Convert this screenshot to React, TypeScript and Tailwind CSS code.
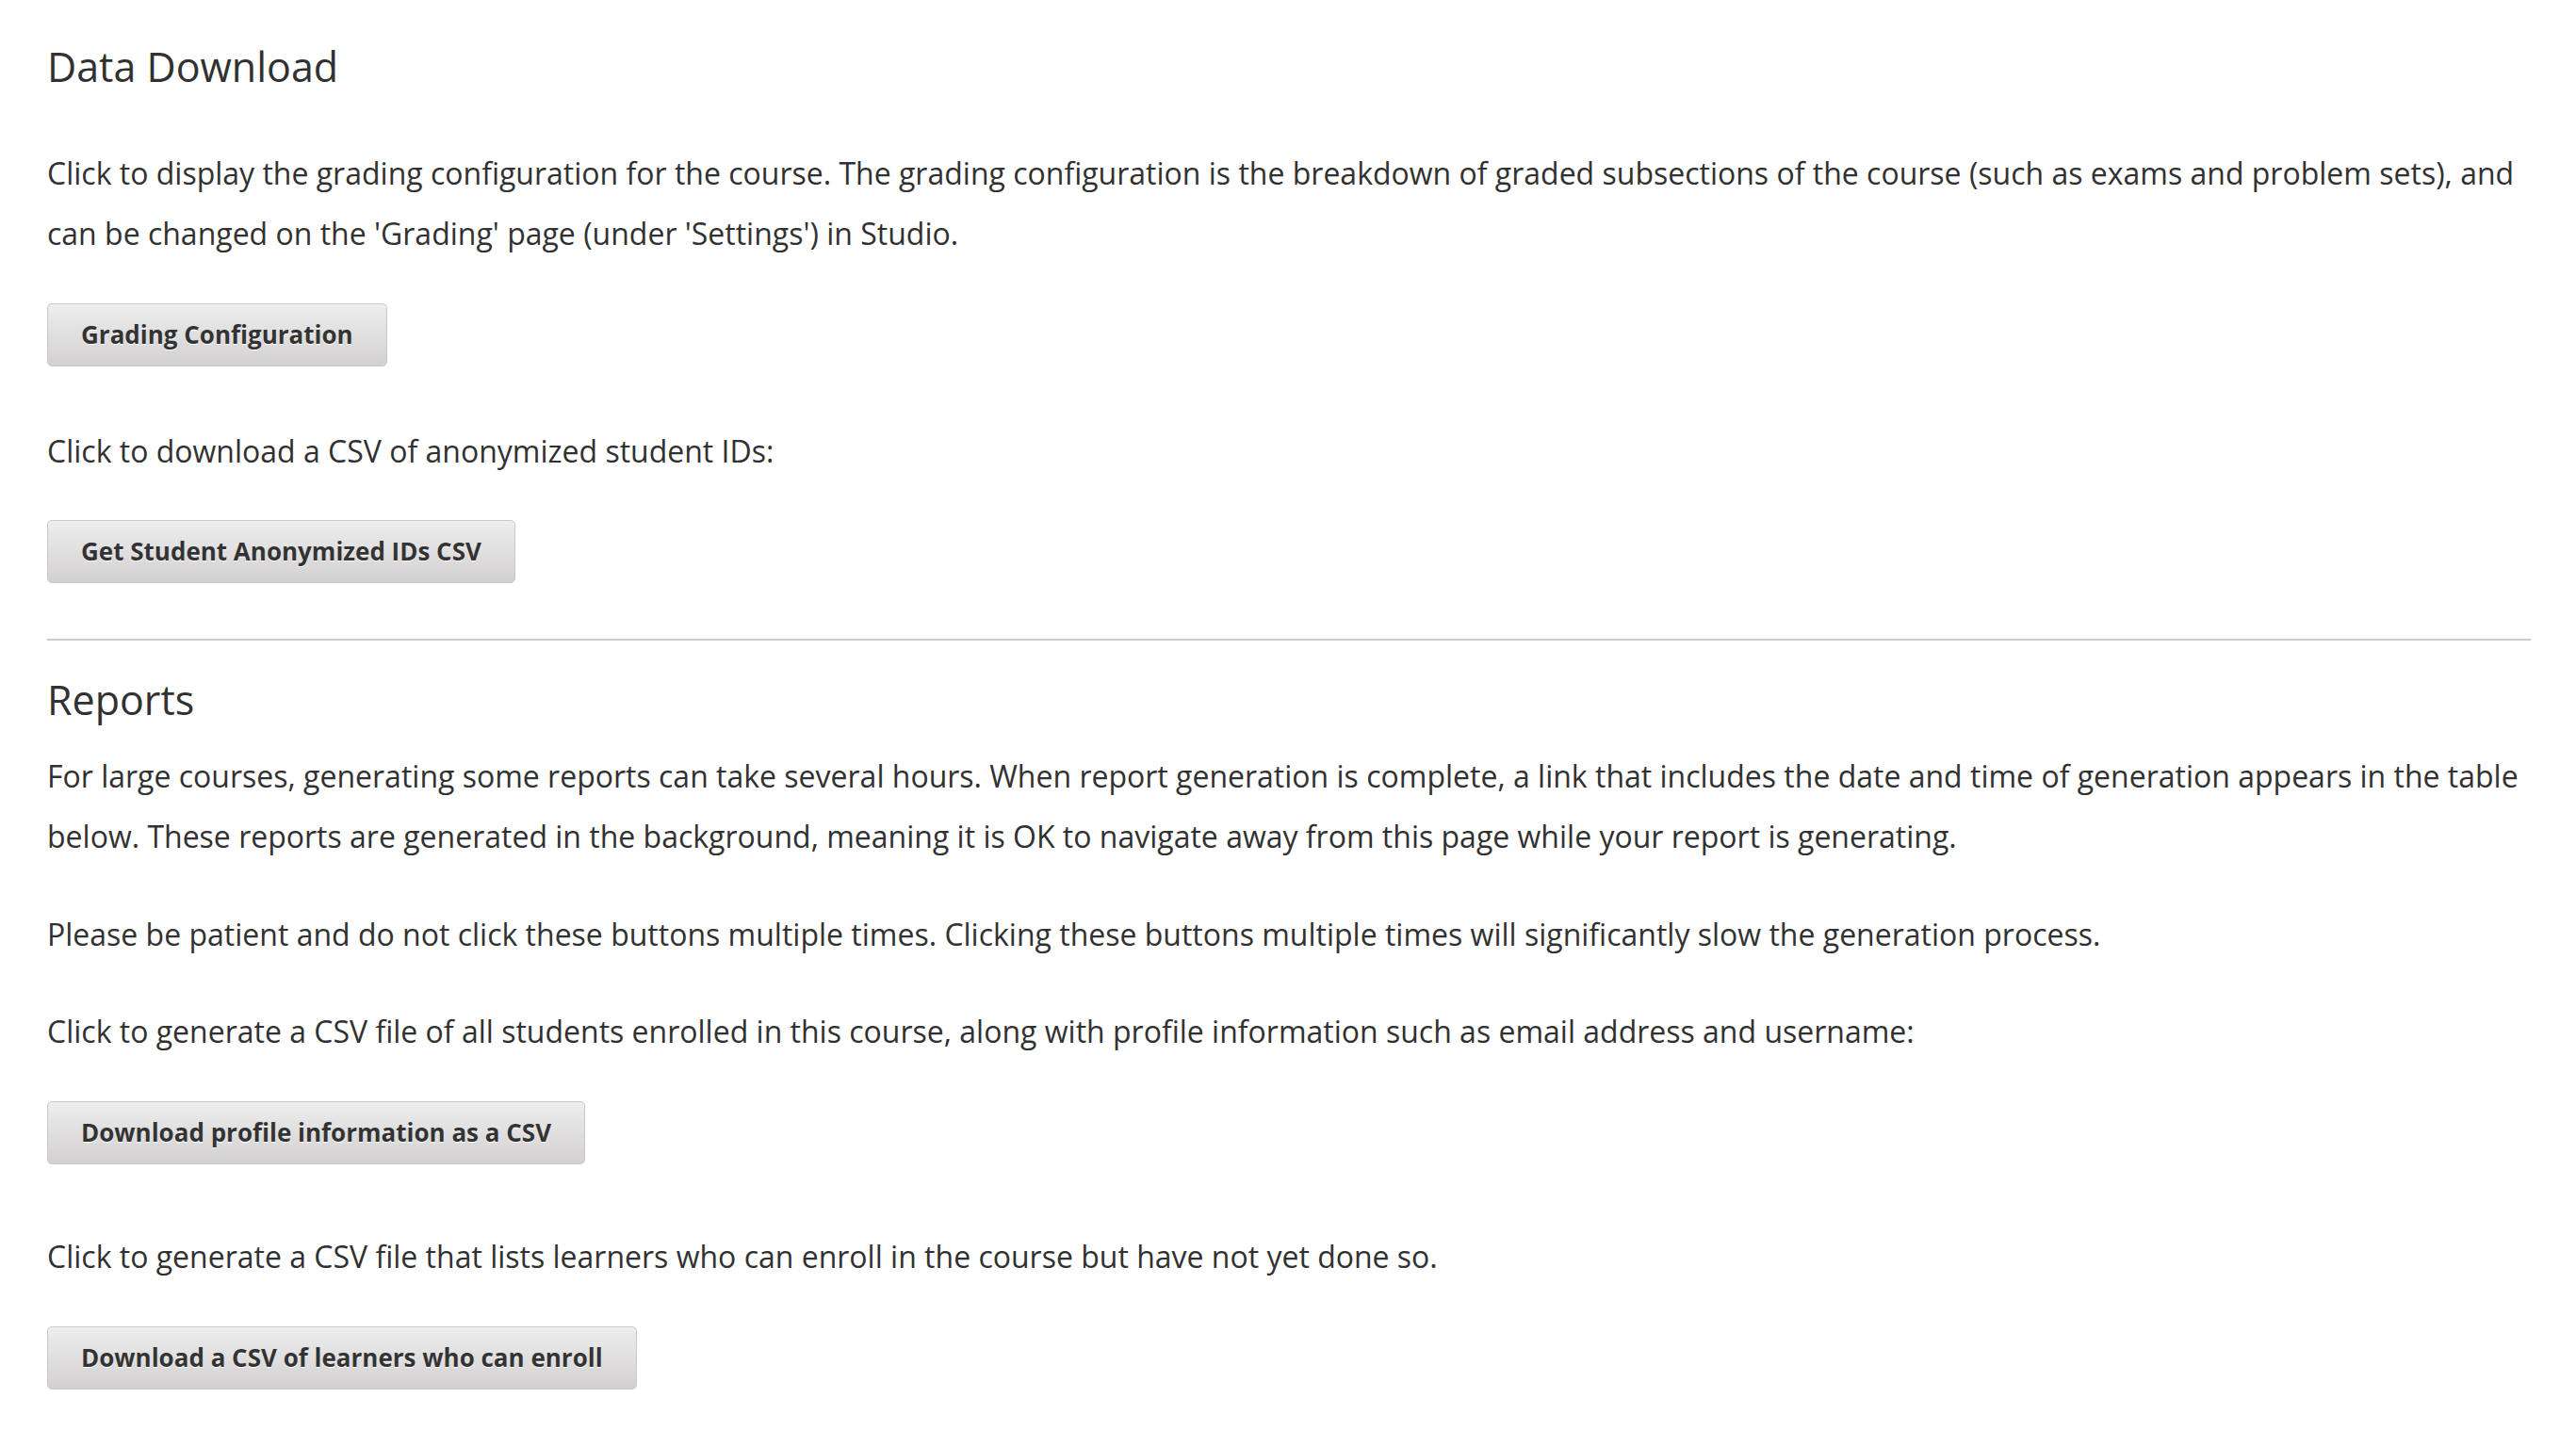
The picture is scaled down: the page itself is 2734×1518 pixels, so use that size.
import React from 'react';

const GrayBtn: React.FC<{ children: React.ReactNode }> = ({ children }) => (
    <button
        type="button"
        className="block rounded-[5px] border border-[#c9c7c7] bg-linear-to-b from-[#eeeeee] to-[#d3d0d0] px-[35px] py-0 h-[67px] text-[26px] font-bold text-[#333] [text-shadow:0_1px_0_#fff]"
    >
        {children}
    </button>
);

const App: React.FC = () => {
    return (
        <div className="min-h-screen bg-white pl-[50px] pr-[48px] pt-[44px] text-[#313131] font-['Open_Sans',sans-serif]">
            <h2 className="text-[43px] leading-[53px] font-normal">Data Download</h2>

            <p className="mt-[55px] text-[32px] leading-[64px]">
                Click to display the grading configuration for the course. The grading configuration is the breakdown of graded subsections of the course (such as exams and problem sets), and can be changed on the 'Grading' page (under 'Settings') in Studio.
            </p>
            <div className="mt-[42px]">
                <GrayBtn>Grading Configuration</GrayBtn>
            </div>

            <p className="mt-[58px] text-[32px] leading-[64px]">Click to download a CSV of anonymized student IDs:</p>
            <div className="mt-[41px]">
                <GrayBtn>Get Student Anonymized IDs CSV</GrayBtn>
            </div>

            <hr className="mt-[59px] border-0 h-[2px] bg-[#cccccc]" />

            <h2 className="mt-[36px] text-[43px] leading-[53px] font-normal">Reports</h2>
            <p className="mt-[23px] text-[32px] leading-[64px]">
                For large courses, generating some reports can take several hours. When report generation is complete, a link that includes the date and time of generation appears in the table below. These reports are generated in the background, meaning it is OK to navigate away from this page while your report is generating.
            </p>
            <p className="mt-[40px] text-[32px] leading-[64px]">
                Please be patient and do not click these buttons multiple times. Clicking these buttons multiple times will significantly slow the generation process.
            </p>

            <p className="mt-[39px] text-[32px] leading-[64px]">
                Click to generate a CSV file of all students enrolled in this course, along with profile information such as email address and username:
            </p>
            <div className="mt-[42px]">
                <GrayBtn>Download profile information as a CSV</GrayBtn>
            </div>

            <p className="mt-[66px] text-[32px] leading-[64px]">
                Click to generate a CSV file that lists learners who can enroll in the course but have not yet done so.
            </p>
            <div className="mt-[42px]">
                <GrayBtn>Download a CSV of learners who can enroll</GrayBtn>
            </div>
        </div>
    );
};

export default App;
